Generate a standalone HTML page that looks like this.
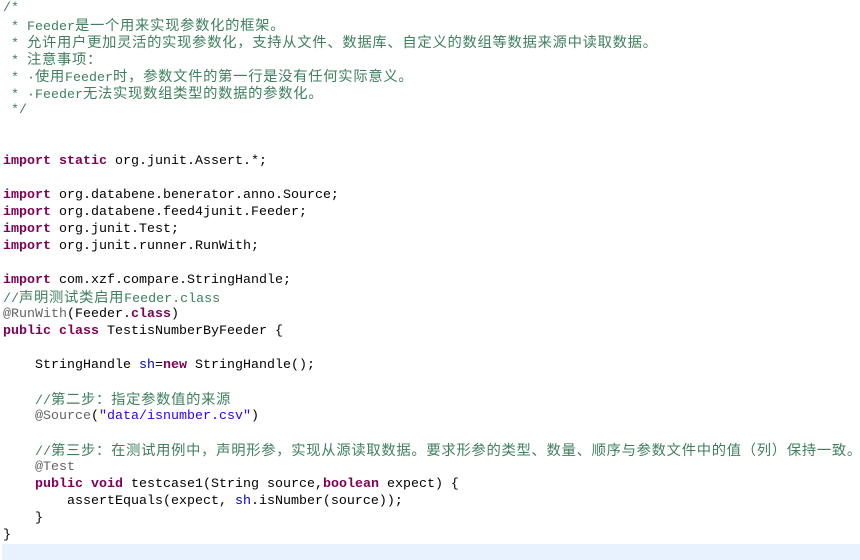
<!DOCTYPE html>
<html><head><meta charset="utf-8"><style>
html,body{margin:0;padding:0;background:#fff;width:860px;height:560px;overflow:hidden}
.l{position:absolute;left:3px;height:17px;line-height:17px;white-space:pre;font-family:"Liberation Mono","Noto Sans CJK SC",monospace;font-size:13.33px;color:#000}
.c{color:#3F7F5F}
.k{color:#7F0055;font-weight:bold}
.s{color:#2A00FF}
.f{color:#0000C0}
.a{color:#646464}
.z{font-family:"Noto Sans CJK SC","WenQuanYi Zen Hei",sans-serif;font-size:14.3px;letter-spacing:0.72px;line-height:15px}
#hl{position:absolute;left:2px;top:544px;width:858px;height:16px;background:#E8F2FE}
</style></head><body>
<div id="hl"></div>
<div class="l c" style="top:0">/*</div>
<div class="l c" style="top:17px"> * Feeder<span class="z">是一个用来实现参数化的框架。</span></div>
<div class="l c" style="top:34px"> * <span class="z">允许用户更加灵活的实现参数化，支持从文件、数据库、自定义的数组等数据来源中读取数据。</span></div>
<div class="l c" style="top:51px"> * <span class="z">注意事项：</span></div>
<div class="l c" style="top:68px"> * ·<span class="z">使用</span>Feeder<span class="z">时，参数文件的第一行是没有任何实际意义。</span></div>
<div class="l c" style="top:85px"> * ·Feeder<span class="z">无法实现数组类型的数据的参数化。</span></div>
<div class="l c" style="top:102px"> */</div>
<div class="l" style="top:153px"><span class="k">import static</span> org.junit.Assert.*;</div>
<div class="l" style="top:187px"><span class="k">import</span> org.databene.benerator.anno.Source;</div>
<div class="l" style="top:204px"><span class="k">import</span> org.databene.feed4junit.Feeder;</div>
<div class="l" style="top:221px"><span class="k">import</span> org.junit.Test;</div>
<div class="l" style="top:238px"><span class="k">import</span> org.junit.runner.RunWith;</div>
<div class="l" style="top:272px"><span class="k">import</span> com.xzf.compare.StringHandle;</div>
<div class="l c" style="top:289px">//<span class="z">声明测试类启用</span>Feeder.class</div>
<div class="l" style="top:306px"><span class="a">@RunWith</span>(Feeder.<span class="k">class</span>)</div>
<div class="l" style="top:323px"><span class="k">public class</span> TestisNumberByFeeder {</div>
<div class="l" style="top:357px">    StringHandle <span class="f">sh</span>=<span class="k">new</span> StringHandle();</div>
<div class="l" style="top:391px">    <span class="c">//<span class="z">第二步：指定参数值的来源</span></span></div>
<div class="l" style="top:408px">    <span class="a">@Source</span>(<span class="s">"data/isnumber.csv"</span>)</div>
<div class="l" style="top:442px">    <span class="c">//<span class="z">第三步：在测试用例中，声明形参，实现从源读取数据。要求形参的类型、数量、顺序与参数文件中的值（列）保持一致。</span></span></div>
<div class="l" style="top:459px">    <span class="a">@Test</span></div>
<div class="l" style="top:476px">    <span class="k">public void</span> testcase1(String source,<span class="k">boolean</span> expect) {</div>
<div class="l" style="top:493px">        assertEquals(expect, <span class="f">sh</span>.isNumber(source));</div>
<div class="l" style="top:510px">    }</div>
<div class="l" style="top:527px">}</div>
</body></html>
